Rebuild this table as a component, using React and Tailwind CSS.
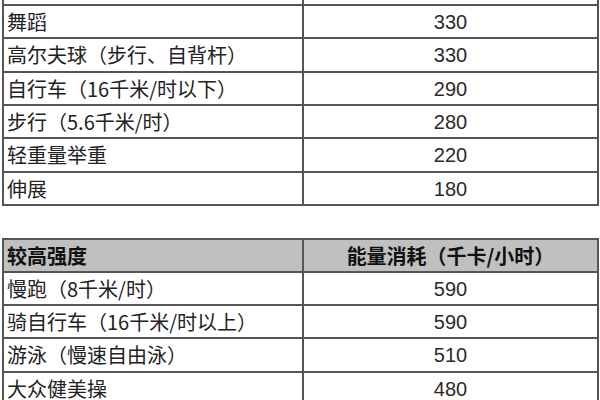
const lowRows = [
  { name: "舞蹈", kcal: "330", h: "h-[33px]" },
  { name: "高尔夫球（步行、自背杆）", kcal: "330", h: "h-[34px]" },
  { name: "自行车（16千米/时以下）", kcal: "290", h: "h-[33px]" },
  { name: "步行（5.6千米/时）", kcal: "280", h: "h-[33px]" },
  { name: "轻重量举重", kcal: "220", h: "h-[34px]" },
  { name: "伸展", kcal: "180", h: "h-[33px]" },
];

const highRows = [
  { name: "慢跑（8千米/时）", kcal: "590", h: "h-[33px]" },
  { name: "骑自行车（16千米/时以上）", kcal: "590", h: "h-[33px]" },
  { name: "游泳（慢速自由泳）", kcal: "510", h: "h-[34px]" },
  { name: "大众健美操", kcal: "480", h: "h-[34px]" },
];

const cjk = "font-['Noto_Sans_CJK_SC','Noto_Sans',sans-serif]";

function Row({ name, kcal, h }) {
  return (
    <div className={`grid grid-cols-[300px_1fr] border-b-2 border-[#555] ${h}`}>
      <div
        className={`flex items-center pl-[3px] border-r-2 border-[#555] text-[20px] leading-none text-[#222] ${cjk}`}
      >
        {name}
      </div>
      <div className="flex items-center justify-center text-[20px] leading-none text-[#2a2a2a] font-['Liberation_Sans',Arial,sans-serif]">
        {kcal}
      </div>
    </div>
  );
}

export default function App() {
  return (
    <div className="w-[600px] h-[400px] overflow-hidden bg-white">
      {/* 低强度 (cut off at top) */}
      <div className="ml-[2px] w-[597px] border-x-2 border-[#555]">
        <div className="grid grid-cols-[300px_1fr] h-[6px] border-b-2 border-[#555]">
          <div className="border-r-2 border-[#555]" />
          <div />
        </div>
        {lowRows.map((r) => (
          <Row key={r.name} {...r} />
        ))}
      </div>

      {/* 较高强度 */}
      <div className="mt-[32px] ml-[2px] w-[597px] border-x-2 border-t-2 border-[#555]">
        <div className="grid grid-cols-[300px_1fr] h-[33px] border-b-2 border-[#555] bg-[#c0c0c0]">
          <div
            className={`flex items-center pl-[3px] border-r-2 border-[#555] text-[20px] leading-none font-bold text-[#111] ${cjk}`}
          >
            较高强度
          </div>
          <div
            className={`flex items-center justify-center text-[20px] leading-none font-bold text-[#111] ${cjk}`}
          >
            能量消耗（千卡/小时）
          </div>
        </div>
        {highRows.map((r) => (
          <Row key={r.name} {...r} />
        ))}
      </div>
    </div>
  );
}
